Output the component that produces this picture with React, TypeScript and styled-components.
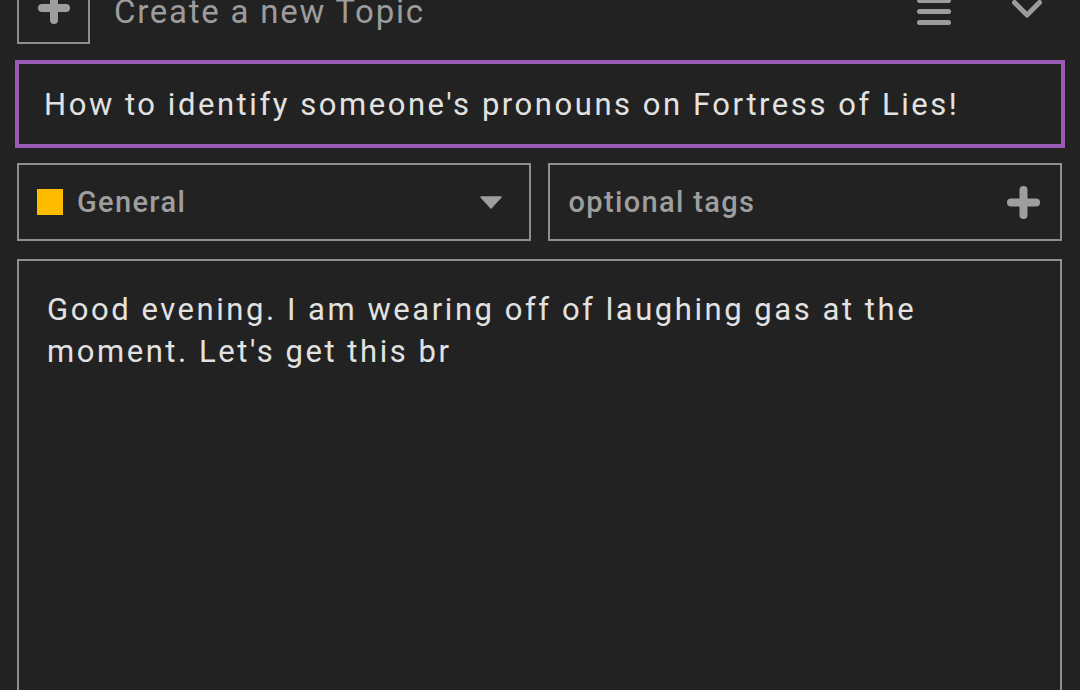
import styled, { createGlobalStyle } from "styled-components"

const GlobalStyle = createGlobalStyle`
  html, body {
    margin: 0;
    padding: 0;
    background: #222222;
    overflow: hidden;
  }
  body {
    font-family: Roboto, "Noto Sans", "Liberation Sans", sans-serif;
  }
`

const Page = styled.div`
  width: 1080px;
  height: 690px;
  box-sizing: border-box;
  padding: 0 18px 0 17px;
  background: #222222;
  overflow: hidden;
`

const Header = styled.div`
  margin-top: -29px;
  height: 73px;
  display: flex;
  align-items: flex-start;
`

const AddBox = styled.div`
  width: 73px;
  height: 73px;
  box-sizing: border-box;
  border: 2px solid #8f8f8f;
  display: flex;
  align-items: center;
  justify-content: center;
  flex-shrink: 0;
`

const HeaderTitle = styled.div`
  margin-left: 24px;
  margin-top: 21px;
  font-size: 33px;
  line-height: 40px;
  letter-spacing: 1.75px;
  color: #9c9c9c;
  flex: 1;
  white-space: nowrap;
`

const HeaderIcons = styled.div`
  display: flex;
  align-items: flex-start;
  gap: 60px;
  margin-top: 27px;
  margin-right: 19px;
`

const TitleBox = styled.div`
  margin: 16px -3px 0 -2px;
  height: 88px;
  box-sizing: border-box;
  border: 4px solid #9b59b6;
  display: flex;
  align-items: center;
  padding-left: 25px;
  font-size: 31px;
  letter-spacing: 2.55px;
  color: #e2e2e2;
  white-space: nowrap;
`

const Row = styled.div`
  margin-top: 15px;
  display: flex;
  gap: 17px;
`

const Field = styled.div<{ $pl: number }>`
  flex: 1;
  height: 78px;
  box-sizing: border-box;
  border: 2px solid #8f8f8f;
  display: flex;
  align-items: center;
  padding: 0 20px 0 ${({ $pl }) => $pl}px;
`

const Swatch = styled.span<{ $color: string }>`
  width: 26px;
  height: 26px;
  background: ${({ $color }) => $color};
  margin-right: 14px;
  flex-shrink: 0;
`

const FieldLabel = styled.span`
  flex: 1;
  font-size: 29px;
  font-weight: 500;
  letter-spacing: 1.35px;
  color: #9e9e9e;
`

const Body = styled.div`
  margin-top: 18px;
  height: 520px;
  box-sizing: border-box;
  border: 2px solid #8f8f8f;
  padding: 28px 28px;
  font-size: 31px;
  line-height: 42px;
  letter-spacing: 2.55px;
  color: #e2e2e2;
`

const Plus = ({ size, thick }: { size: number; thick: number }) => (
  <svg width={size} height={size} viewBox={`0 0 ${size} ${size}`}>
    <line x1={thick / 2} y1={size / 2} x2={size - thick / 2} y2={size / 2} stroke="#9e9e9e" strokeWidth={thick} strokeLinecap="round" />
    <line x1={size / 2} y1={thick / 2} x2={size / 2} y2={size - thick / 2} stroke="#9e9e9e" strokeWidth={thick} strokeLinecap="round" />
  </svg>
)

function App() {
  return (
    <Page>
      <GlobalStyle />
      <Header>
        <AddBox>
          <Plus size={32} thick={8} />
        </AddBox>
        <HeaderTitle>Create a new Topic</HeaderTitle>
        <HeaderIcons>
          <svg width="34" height="28" viewBox="0 0 34 28">
            <g stroke="#9c9c9c" strokeWidth="5" strokeLinecap="round">
              <line x1="2.5" y1="2.5" x2="31.5" y2="2.5" />
              <line x1="2.5" y1="13.5" x2="31.5" y2="13.5" />
              <line x1="2.5" y1="24.5" x2="31.5" y2="24.5" />
            </g>
          </svg>
          <svg width="32" height="22" viewBox="0 0 32 22">
            <polyline points="3.5,4.5 16,17 28.5,4.5" fill="none" stroke="#9c9c9c" strokeWidth="5" strokeLinecap="round" strokeLinejoin="round" />
          </svg>
        </HeaderIcons>
      </Header>
      <TitleBox>How to identify someone's pronouns on Fortress of Lies!</TitleBox>
      <Row>
        <Field $pl={18}>
          <Swatch $color="#ffbb00" />
          <FieldLabel>General</FieldLabel>
          <svg width="22" height="13" viewBox="0 0 22 13" style={{ marginRight: 7 }}>
            <path d="M1 1 H21 L11 12 Z" fill="#9e9e9e" stroke="#9e9e9e" strokeWidth="1.5" strokeLinejoin="round" />
          </svg>
        </Field>
        <Field $pl={19}>
          <FieldLabel>optional tags</FieldLabel>
          <Plus size={33} thick={8} />
        </Field>
      </Row>
      <Body>
        Good evening. I am wearing off of laughing gas at the moment. Let's get this br
      </Body>
    </Page>
  )
}

export default App
